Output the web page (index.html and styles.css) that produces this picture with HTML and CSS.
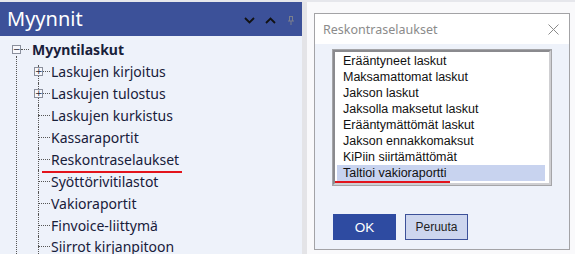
FILE: index.html
```html
<!DOCTYPE html>
<html lang="fi">
<head>
    <meta charset="UTF-8">
    <title>Myynnit</title>
    <link rel="stylesheet" href="styles.css">
</head>
<body>
    <div class="topline"></div>
    <div class="screen">
        <aside class="panel">
            <div class="panel-header">
                <span class="panel-title">Myynnit</span>
                <div class="panel-tools">
                    <svg width="11" height="7" viewBox="0 0 11 7"><path d="M1 1 L5.5 5.5 L10 1" fill="none" stroke="#111" stroke-width="1.8"/></svg>
                    <svg width="11" height="7" viewBox="0 0 11 7"><path d="M1 6 L5.5 1.5 L10 6" fill="none" stroke="#111" stroke-width="1.8"/></svg>
                    <svg width="6" height="9" viewBox="0 0 6 9"><path d="M1 0.5 H5 M1.5 0.5 V5 M4.5 0.5 V5 M0 5 H6 M3 5 V9" fill="none" stroke="#7a7f8c" stroke-width="1"/></svg>
                </div>
            </div>

            <ul class="tree">
                <li class="node root">
                    <span class="box">&minus;</span><span class="dash"></span><span class="label">Myyntilaskut</span>
                </li>
                <li class="node child">
                    <span class="box">+</span><span class="dash short"></span><span class="label">Laskujen kirjoitus</span>
                </li>
                <li class="node child">
                    <span class="box">+</span><span class="dash short"></span><span class="label">Laskujen tulostus</span>
                </li>
                <li class="node child leaf"><span class="dash"></span><span class="label">Laskujen kurkistus</span></li>
                <li class="node child leaf"><span class="dash"></span><span class="label">Kassaraportit</span></li>
                <li class="node child leaf marked"><span class="dash"></span><span class="label">Reskontraselaukset</span></li>
                <li class="node child leaf"><span class="dash"></span><span class="label">Syöttörivitilastot</span></li>
                <li class="node child leaf"><span class="dash"></span><span class="label">Vakioraportit</span></li>
                <li class="node child leaf"><span class="dash"></span><span class="label">Finvoice-liittymä</span></li>
                <li class="node child leaf"><span class="dash"></span><span class="label">Siirrot kirjanpitoon</span></li>
            </ul>
        </aside>

        <div class="splitter"></div>

        <main class="workspace">
            <div class="dialog">
                <div class="dialog-title">
                    <span>Reskontraselaukset</span>
                    <svg width="11" height="11" viewBox="0 0 11 11"><path d="M0.5 0.5 L10.5 10.5 M10.5 0.5 L0.5 10.5" stroke="#8a8a8a" stroke-width="1"/></svg>
                </div>
                <div class="dialog-body">
                    <ul class="listbox">
                        <li>Erääntyneet laskut</li>
                        <li>Maksamattomat laskut</li>
                        <li>Jakson laskut</li>
                        <li>Jaksolla maksetut laskut</li>
                        <li>Erääntymättömät laskut</li>
                        <li>Jakson ennakkomaksut</li>
                        <li>KiPiin siirtämättömät</li>
                        <li class="selected">Taltioi vakioraportti</li>
                    </ul>
                    <div class="buttons">
                        <button class="btn primary">OK</button>
                        <button class="btn">Peruuta</button>
                    </div>
                </div>
            </div>
        </main>
    </div>
</body>
</html>
```

FILE: styles.css
```css
* {
    margin: 0;
    padding: 0;
    box-sizing: border-box;
}

:root {
    --header: #3c5199;
    --panel: #eef2fa;
    --text: #18203a;
    --border: #a3a3a6;
    --red: #e3141c;
}

body {
    width: 575px;
    height: 254px;
    overflow: hidden;
    background: #f9f9fb;
    font-family: "Noto Sans", sans-serif;
}

.topline {
    height: 2px;
    background: #e6e7ec;
}

.screen {
    display: flex;
    height: 252px;
}

/* left panel */

.panel {
    width: 302px;
    background: var(--panel);
    overflow: hidden;
}

.panel-header {
    height: 34px;
    background: var(--header);
    display: flex;
    align-items: center;
    justify-content: space-between;
    padding: 0 8px 0 7px;
}

.panel-title {
    color: #fff;
    font-size: 20px;
    line-height: 1;
}

.panel-tools {
    display: flex;
    align-items: center;
    gap: 8px;
    padding-top: 2px;
}

.panel-tools svg:nth-child(2) {
    margin-left: 2px;
}

.panel-tools svg:last-child {
    margin-left: 4px;
}

.tree {
    list-style: none;
    position: relative;
    padding-top: 3px;
}

.tree::before {
    content: "";
    position: absolute;
    left: 16px;
    top: 20px;
    bottom: -20px;
    border-left: 1px dotted #555;
}

.node {
    height: 21.9px;
    display: flex;
    align-items: center;
    position: relative;
    color: var(--text);
    font-size: 14px;
}

.root {
    padding-left: 12px;
}

.root .label {
    font-weight: bold;
    margin-left: 2px;
}

.child {
    padding-left: 34px;
}

.child::before {
    content: "";
    position: absolute;
    left: 38px;
    top: 0;
    bottom: 0;
    border-left: 1px dotted #555;
}

.node:nth-child(2)::before {
    top: 4px;
}

.box {
    width: 9px;
    height: 9px;
    border: 1px solid #8a8f9c;
    background: #f7f8fc;
    font-size: 9px;
    line-height: 7px;
    text-align: center;
    color: #223;
    position: relative;
    z-index: 1;
    font-family: "DejaVu Sans", sans-serif;
}

.dash {
    width: 8px;
    border-top: 1px dotted #555;
    margin-right: 1px;
}

.dash.short {
    width: 7px;
}

.leaf .dash {
    margin-left: 4px;
    width: 12px;
}

.marked .label {
    position: relative;
}

.marked .label::after {
    content: "";
    position: absolute;
    left: -9px;
    right: -3px;
    bottom: -4px;
    height: 2px;
    background: var(--red);
}

.splitter {
    width: 5px;
    background: #e4e4e7;
}

/* dialog */

.workspace {
    flex: 1;
    padding: 11px 5px 0 7px;
}

.dialog {
    width: 256px;
    height: 237px;
    border: 1px solid var(--border);
    background: var(--panel);
}

.dialog-title {
    height: 30px;
    background: #fff;
    display: flex;
    align-items: center;
    justify-content: space-between;
    padding: 0 10px 0 8px;
    color: #8b8b8b;
    font-size: 12.5px;
}

.dialog-body {
    padding: 6px 0 0 18px;
}

.listbox {
    list-style: none;
    width: 218px;
    height: 135px;
    background: #fff;
    border: 2px solid #cfcfd2;
    border-top-color: #8a8a8e;
    border-left-color: #8a8a8e;
    outline: 1px solid #a5a5a8;
    padding: 1px 4px 0 2px;
    font-family: "Liberation Sans", Arial, sans-serif;
    font-size: 12.5px;
    color: #111;
}

.listbox li {
    height: 16px;
    line-height: 16px;
    padding-left: 6px;
}

.listbox .selected {
    background: #c8d3ef;
    position: relative;
}

.listbox .selected::after {
    content: "";
    position: absolute;
    left: -2px;
    width: 115px;
    bottom: -2px;
    height: 2px;
    background: var(--red);
}

.buttons {
    display: flex;
    gap: 9px;
    margin-top: 29px;
}

.btn {
    width: 63px;
    height: 26px;
    border: 1px solid var(--header);
    background: #cdd6ee;
    font-family: "Liberation Sans", Arial, sans-serif;
    font-size: 12px;
    color: #222;
}

.btn.primary {
    background: #2e4ba1;
    border-color: #2e4ba1;
    color: #fff;
    font-size: 13.5px;
}
```
